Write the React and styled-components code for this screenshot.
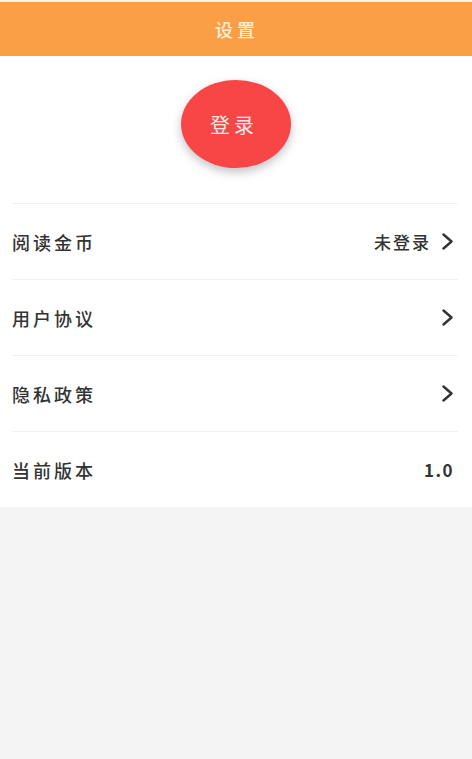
import React from 'react';
import styled, { createGlobalStyle } from 'styled-components';

const GlobalStyle = createGlobalStyle`
  html, body {
    margin: 0;
    padding: 0;
    background: #f4f4f4;
    font-family: "Noto Sans CJK SC", "Noto Sans", sans-serif;
  }
`;

const Page = styled.div`
  width: 472px;
  min-height: 759px;
  background: #f4f4f4;
  padding-top: 2px;
  box-sizing: border-box;
`;

const TopBar = styled.header`
  height: 54px;
  background: #fa9f45;
  display: flex;
  align-items: center;
  justify-content: center;
  color: #fdf0dc;
  font-size: 18px;
  font-weight: 500;
  letter-spacing: 4px;
  padding-left: 2px;
`;

const Panel = styled.div`
  background: #fff;
`;

const LoginArea = styled.div`
  height: 147px;
  display: flex;
  justify-content: center;
  padding-top: 24px;
  box-sizing: border-box;
`;

const LoginButton = styled.button`
  width: 110px;
  height: 88px;
  border: none;
  border-radius: 50%;
  background: #f84646;
  color: #fde9e6;
  font-family: inherit;
  font-size: 20px;
  letter-spacing: 4px;
  padding-left: 2px;
  box-shadow: 0 4px 10px rgba(80, 80, 100, 0.35);
  cursor: pointer;
`;

const List = styled.div`
  padding: 0 14px 0 12px;
`;

const Row = styled.div`
  height: 76px;
  display: flex;
  align-items: center;
  justify-content: space-between;
  border-top: 1.5px solid #f1f1f1;
  box-sizing: border-box;
  padding-right: 4px;
`;

const Label = styled.span`
  color: #333;
  font-size: 18px;
  font-weight: 500;
  letter-spacing: 3px;
`;

const Right = styled.span`
  display: flex;
  align-items: center;
  gap: 10px;
  color: #333;
  font-size: ${(p) => (p.$num ? '17px' : '17px')};
  font-weight: ${(p) => (p.$num ? 700 : 500)};
  letter-spacing: ${(p) => (p.$num ? '1.5px' : '2px')};
`;

const Chevron = () => (
  <svg width="13" height="17" viewBox="0 0 13 17">
    <path d="M2.5 1.5 L10.5 8.5 L2.5 15.5" fill="none" stroke="#333" strokeWidth="2.4" strokeLinecap="round" strokeLinejoin="round" />
  </svg>
);

const rows = [
  { label: '阅读金币', value: '未登录', arrow: true },
  { label: '用户协议', arrow: true },
  { label: '隐私政策', arrow: true },
  { label: '当前版本', value: '1.0', num: true },
];

export default function App() {
  return (
    <Page>
      <GlobalStyle />
      <TopBar>设置</TopBar>
      <Panel>
        <LoginArea>
          <LoginButton>登录</LoginButton>
        </LoginArea>
        <List>
          {rows.map((r) => (
            <Row key={r.label}>
              <Label>{r.label}</Label>
              <Right $num={r.num}>
                {r.value && <span>{r.value}</span>}
                {r.arrow && <Chevron />}
              </Right>
            </Row>
          ))}
        </List>
      </Panel>
    </Page>
  );
}
